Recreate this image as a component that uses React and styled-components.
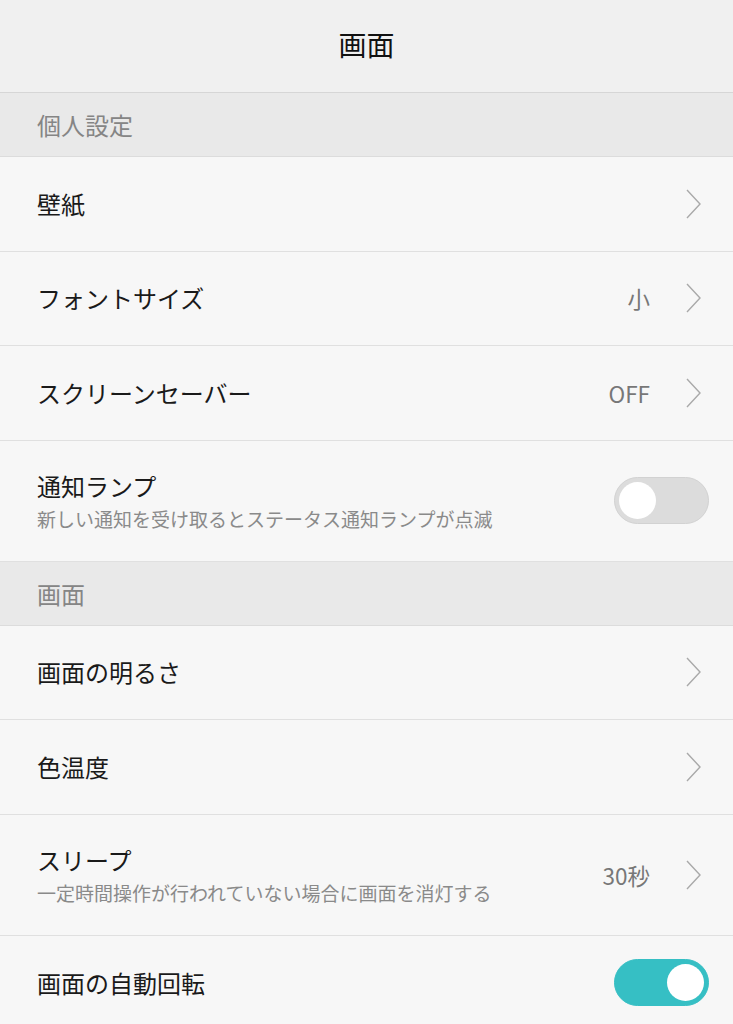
import React from 'react';
import styled, { createGlobalStyle } from 'styled-components';

const GlobalStyle = createGlobalStyle`
  body {
    margin: 0;
    background: #f7f7f7;
    font-family: "Noto Sans CJK JP", "Noto Sans", sans-serif;
  }
`;

const Page = styled.div`
  width: 733px;
  height: 1024px;
  overflow: hidden;
  background: #f7f7f7;
`;

const Header = styled.header`
  height: 92px;
  display: flex;
  align-items: center;
  justify-content: center;
  padding-bottom: 4px;
  box-sizing: border-box;
  height: 93px;
  background: #f0f0f0;
  border-bottom: 1px solid #d6d6d6;
  font-size: 28px;
  color: #111;
`;

const Section = styled.div`
  height: 63px;
  display: flex;
  align-items: center;
  padding-left: 37px;
  background: #e9e9e9;
  border-bottom: 1px solid #dcdcdc;
  font-size: 24px;
  color: #858585;
`;

const Row = styled.div`
  height: ${(p) => (p.$tall ? 121 : 94.5)}px;
  display: flex;
  align-items: center;
  padding: 0 24px 0 37px;
  border-bottom: 1px solid #e0e0e0;
  background: #f7f7f7;
  box-sizing: border-box;
  &:last-child {
    border-bottom: none;
  }
`;

const Texts = styled.div`
  flex: 1;
  display: flex;
  flex-direction: column;
`;

const Title = styled.div`
  font-size: 24px;
  color: #1a1a1a;
  line-height: 32px;
`;

const Sub = styled.div`
  font-size: 19px;
  color: #8a8a8a;
  line-height: 24px;
  margin-top: 5px;
`;

const Value = styled.span`
  font-size: 22.5px;
  color: #777;
  margin-right: 35px;
`;

const Chevron = () => (
  <svg width="18" height="30" viewBox="0 0 18 30" style={{ marginRight: 6 }}>
    <path d="M2 1 L15 15 L2 29" fill="none" stroke="#a9a9a9" strokeWidth="1.4" />
  </svg>
);

const Toggle = styled.div`
  width: 95px;
  height: 47px;
  border-radius: 24px;
  box-sizing: border-box;
  position: relative;
  background: ${(p) => (p.$on ? '#36bfc4' : '#dcdcdc')};
  border: 1px solid ${(p) => (p.$on ? '#36bfc4' : '#d2d2d2')};
  &::after {
    content: '';
    position: absolute;
    top: 4px;
    left: ${(p) => (p.$on ? '52px' : '4px')};
    width: 37px;
    height: 37px;
    border-radius: 50%;
    background: #fff;
  }
`;

const items = [
  { section: '個人設定' },
  { title: '壁紙', chevron: true },
  { title: 'フォントサイズ', value: '小', chevron: true },
  { title: 'スクリーンセーバー', value: 'OFF', chevron: true },
  {
    title: '通知ランプ',
    sub: '新しい通知を受け取るとステータス通知ランプが点滅',
    toggle: false,
  },
  { section: '画面' },
  { title: '画面の明るさ', chevron: true },
  { title: '色温度', chevron: true },
  {
    title: 'スリープ',
    sub: '一定時間操作が行われていない場合に画面を消灯する',
    value: '30秒',
    chevron: true,
  },
  { title: '画面の自動回転', toggle: true },
];

const App = () => (
  <Page>
    <GlobalStyle />
    <Header>画面</Header>
    {items.map((item, index) =>
      item.section ? (
        <Section key={index}>{item.section}</Section>
      ) : (
        <Row key={index} $tall={!!item.sub}>
          <Texts>
            <Title>{item.title}</Title>
            {item.sub && <Sub>{item.sub}</Sub>}
          </Texts>
          {item.value && <Value>{item.value}</Value>}
          {item.chevron && <Chevron />}
          {item.toggle !== undefined && <Toggle $on={item.toggle} />}
        </Row>
      )
    )}
  </Page>
);

export default App;
